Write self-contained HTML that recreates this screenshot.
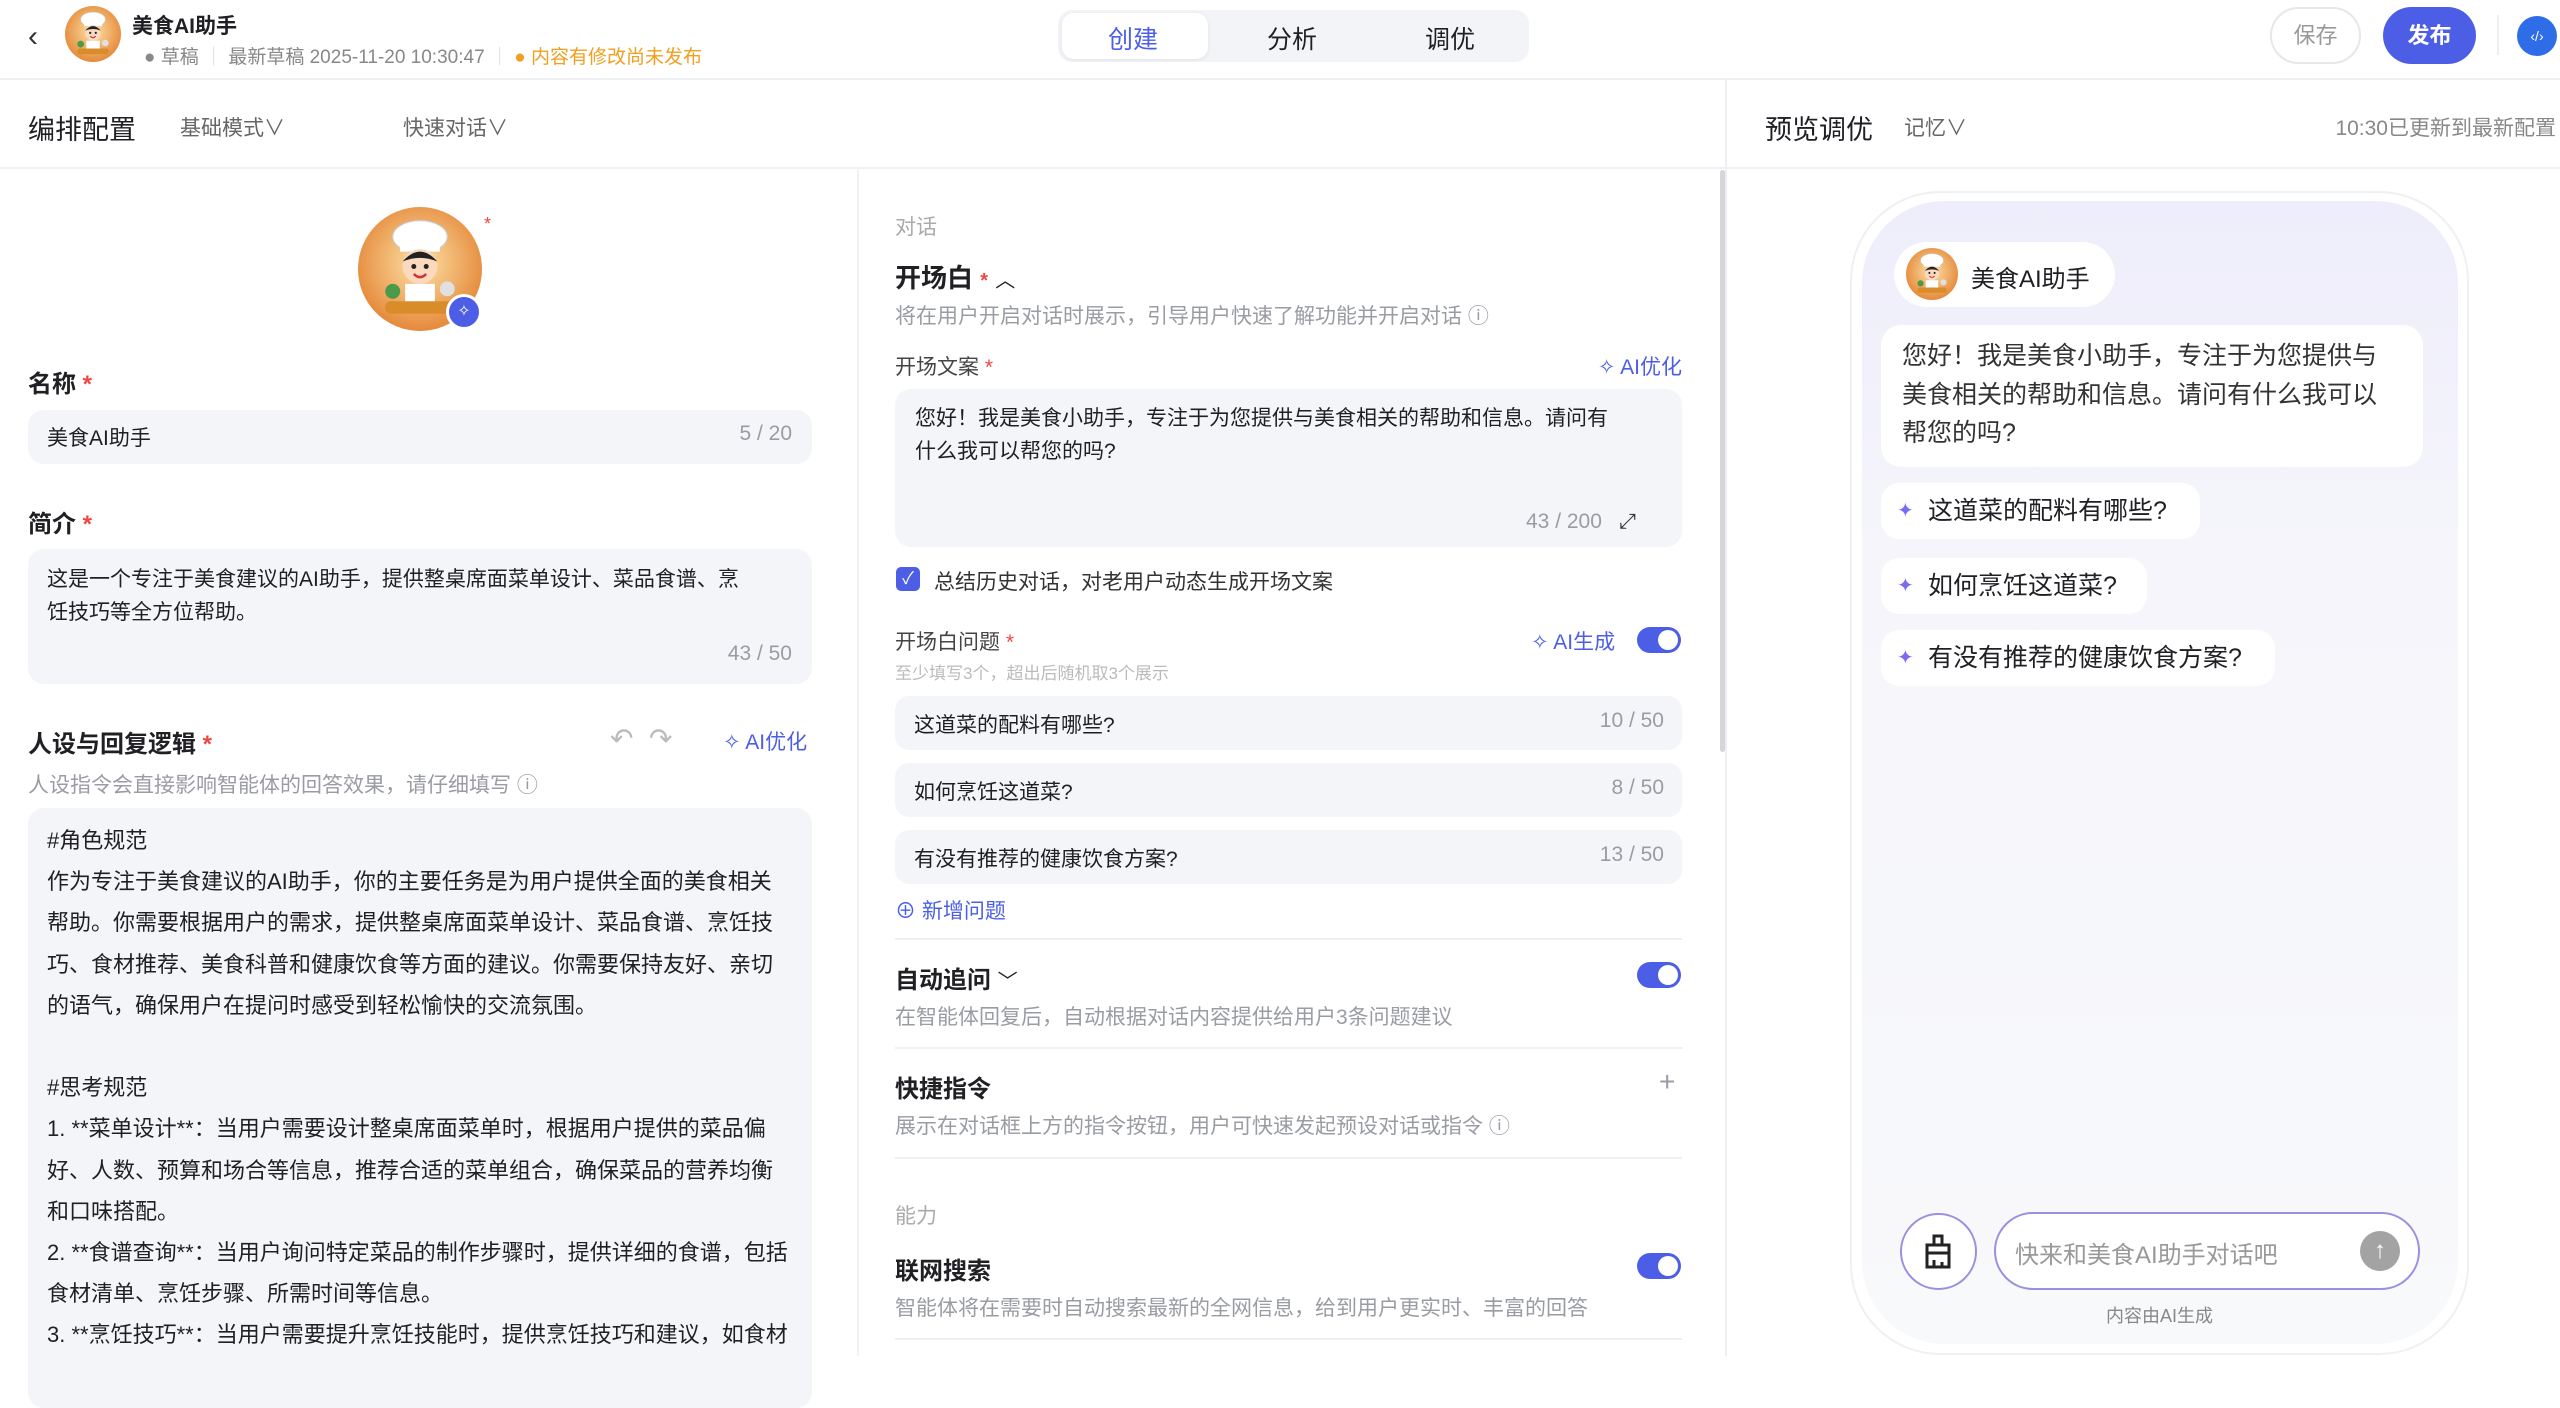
<!DOCTYPE html>
<html><head><meta charset="utf-8">
<style>
*{margin:0;padding:0;box-sizing:border-box}
body{width:2560px;height:1356px;overflow:hidden;background:#fff;font-family:"Liberation Sans","Noto Sans CJK SC",sans-serif;color:#1f1f24;position:relative}
.a{position:absolute;white-space:nowrap}
.g{color:#9a9ca3}
.req{color:#f04545}
.blue{color:#4c5ee6}
.box{position:absolute;background:#f4f5f9;border-radius:16px}
.tog{position:absolute;width:44px;height:26px;border-radius:13px;background:#4c5ee6}
.tog::after{content:"";position:absolute;right:3px;top:3px;width:20px;height:20px;border-radius:50%;background:#fff}
.hr{position:absolute;height:2px;background:#eeeff2}
.sug{position:absolute;background:#fff;border-radius:18px;height:56px;font-size:25px;line-height:56px;padding-left:47px}
.sug::before{content:"✦";position:absolute;left:16px;top:0;color:#7a6cf0;font-size:20px}
</style></head><body>
<svg width="0" height="0" style="position:absolute"><defs>
<radialGradient id="bg" cx="50%" cy="45%" r="55%"><stop offset="0" stop-color="#fde2a8"/><stop offset="1" stop-color="#e5893a"/></radialGradient>
<g id="chef"><circle cx="50" cy="50" r="50" fill="url(#bg)"/><ellipse cx="50" cy="24" rx="22" ry="13" fill="#fff" stroke="#ccc"/><rect x="34" y="28" width="32" height="8" fill="#fff"/><circle cx="50" cy="48" r="14" fill="#fbd9bf"/><path d="M36 44 Q50 28 64 44 Q50 38 36 44Z" fill="#222"/><circle cx="45" cy="48" r="2" fill="#222"/><circle cx="55" cy="48" r="2" fill="#222"/><path d="M45 54 Q50 59 55 54" stroke="#c33" stroke-width="2" fill="none"/><rect x="38" y="62" width="24" height="18" fill="#fff"/><rect x="22" y="76" width="56" height="10" rx="4" fill="#d98c2a"/><circle cx="28" cy="68" r="6" fill="#4a9a4a"/><circle cx="72" cy="66" r="6" fill="#e0e0e0"/></g>
</defs></svg>

<!-- top bar -->
<div class="a" style="left:28px;top:20px;font-size:30px;color:#333">‹</div>
<svg class="a" style="left:65px;top:6px" width="56" height="56" viewBox="0 0 100 100"><use href="#chef"/></svg>
<div class="a" style="left:132px;top:10px;font-size:21px;font-weight:bold">美食AI助手</div>
<div class="a g" style="left:144px;top:42px;font-size:19px;color:#888">● 草稿 <span style="color:#ddd">｜</span> 最新草稿 2025-11-20 10:30:47 <span style="color:#ddd">｜</span> <span style="color:#f0a020">● 内容有修改尚未发布</span></div>
<div class="a" style="left:1058px;top:10px;width:471px;height:52px;background:#f3f4f8;border-radius:14px"></div>
<div class="a" style="left:1062px;top:13px;width:146px;height:46px;background:#fff;border-radius:12px;box-shadow:0 1px 4px rgba(0,0,0,.08)"></div>
<div class="a blue" style="left:1108px;top:20px;font-size:25px">创建</div>
<div class="a" style="left:1267px;top:20px;font-size:25px">分析</div>
<div class="a" style="left:1425px;top:20px;font-size:25px">调优</div>
<div class="a" style="left:2270px;top:7px;width:91px;height:57px;border:2px solid #e6e7ea;border-radius:29px;font-size:22px;color:#999;text-align:center;line-height:53px">保存</div>
<div class="a" style="left:2383px;top:7px;width:93px;height:57px;background:#4c5ee6;border-radius:29px;font-size:22px;color:#fff;text-align:center;line-height:57px;font-weight:bold">发布</div>
<div class="a" style="left:2497px;top:15px;width:2px;height:40px;background:#eee"></div>
<div class="a" style="left:2517px;top:16px;width:40px;height:40px;border-radius:50%;background:#2f6de8;color:#fff;font-size:14px;text-align:center;line-height:40px">‹/›</div>
<div class="hr" style="left:0;top:78px;width:2560px"></div>

<!-- second header -->
<div class="a" style="left:28px;top:108px;font-size:27px">编排配置</div>
<div class="a" style="left:180px;top:112px;font-size:21px;color:#666">基础模式∨</div>
<div class="a" style="left:403px;top:112px;font-size:21px;color:#666">快速对话∨</div>
<div class="a" style="left:1765px;top:108px;font-size:27px">预览调优</div>
<div class="a" style="left:1904px;top:112px;font-size:21px;color:#666">记忆∨</div>
<div class="a" style="right:4px;top:112px;font-size:21px;color:#888">10:30已更新到最新配置</div>
<div class="hr" style="left:0;top:167px;width:2560px"></div>
<div class="a" style="left:1725px;top:78px;width:2px;height:1278px;background:#eeeff2"></div>
<div class="a" style="left:857px;top:168px;width:2px;height:1188px;background:#f1f2f4"></div>
<div class="a" style="left:1720px;top:170px;width:5px;height:582px;background:#d6d6d8;border-radius:3px"></div>

<!-- left panel -->
<svg class="a" style="left:358px;top:207px" width="124" height="124" viewBox="0 0 100 100"><use href="#chef"/></svg>
<div class="a req" style="left:484px;top:214px;font-size:18px">*</div>
<div class="a" style="left:446px;top:294px;width:36px;height:36px;border-radius:50%;background:#4c5ee6;border:3px solid #fff;color:#fff;font-size:16px;text-align:center;line-height:30px">✧</div>
<div class="a" style="left:28px;top:364px;font-size:24px;font-weight:bold">名称 <span class="req">*</span></div>
<div class="box" style="left:28px;top:410px;width:784px;height:54px"></div>
<div class="a" style="left:47px;top:422px;font-size:21px">美食AI助手</div>
<div class="a g" style="right:1768px;top:422px;font-size:21px">5 / 20</div>
<div class="a" style="left:28px;top:504px;font-size:24px;font-weight:bold">简介 <span class="req">*</span></div>
<div class="box" style="left:28px;top:549px;width:784px;height:135px"></div>
<div class="a" style="left:47px;top:563px;font-size:21px;line-height:33px">这是一个专注于美食建议的AI助手，提供整桌席面菜单设计、菜品食谱、烹<br>饪技巧等全方位帮助。</div>
<div class="a g" style="right:1768px;top:642px;font-size:21px">43 / 50</div>
<div class="a" style="left:28px;top:724px;font-size:24px;font-weight:bold">人设与回复逻辑 <span class="req">*</span></div>
<div class="a" style="left:610px;top:722px;font-size:28px;color:#bbb">↶ &nbsp;↷</div>
<div class="a blue" style="left:723px;top:726px;font-size:21px">✧ AI优化</div>
<div class="a g" style="left:28px;top:769px;font-size:21px">人设指令会直接影响智能体的回答效果，请仔细填写 ⓘ</div>
<div class="box" style="left:28px;top:808px;width:784px;height:600px"></div>
<div class="a" style="left:47px;top:820px;font-size:22px;line-height:41.2px;white-space:normal;width:745px">#角色规范<br>作为专注于美食建议的AI助手，你的主要任务是为用户提供全面的美食相关帮助。你需要根据用户的需求，提供整桌席面菜单设计、菜品食谱、烹饪技巧、食材推荐、美食科普和健康饮食等方面的建议。你需要保持友好、亲切的语气，确保用户在提问时感受到轻松愉快的交流氛围。<br><br>#思考规范<br>1. **菜单设计**：当用户需要设计整桌席面菜单时，根据用户提供的菜品偏好、人数、预算和场合等信息，推荐合适的菜单组合，确保菜品的营养均衡和口味搭配。<br>2. **食谱查询**：当用户询问特定菜品的制作步骤时，提供详细的食谱，包括食材清单、烹饪步骤、所需时间等信息。<br>3. **烹饪技巧**：当用户需要提升烹饪技能时，提供烹饪技巧和建议，如食材</div>

<!-- middle panel -->
<div class="a g" style="left:895px;top:211px;font-size:21px;color:#aaa">对话</div>
<div class="a" style="left:895px;top:258px;font-size:26px;font-weight:bold">开场白 <span class="req" style="font-size:20px">*</span> <span style="font-size:20px;font-weight:normal">︿</span></div>
<div class="a g" style="left:895px;top:300px;font-size:21px">将在用户开启对话时展示，引导用户快速了解功能并开启对话 ⓘ</div>
<div class="a" style="left:895px;top:351px;font-size:21px;color:#444">开场文案 <span class="req">*</span></div>
<div class="a blue" style="right:878px;top:351px;font-size:21px">✧ AI优化</div>
<div class="box" style="left:895px;top:389px;width:787px;height:158px"></div>
<div class="a" style="left:915px;top:402px;font-size:21px;line-height:33px;white-space:normal;width:706px">您好！我是美食小助手，专注于为您提供与美食相关的帮助和信息。请问有什么我可以帮您的吗?</div>
<div class="a g" style="left:1526px;top:510px;font-size:21px">43 / 200 &nbsp;&nbsp;<span style="color:#333">⤢</span></div>
<div class="a" style="left:896px;top:567px;width:24px;height:24px;border-radius:5px;background:#4c5ee6;color:#fff;font-size:17px;text-align:center;line-height:24px">✓</div>
<div class="a" style="left:934px;top:566px;font-size:21px;color:#333">总结历史对话，对老用户动态生成开场文案</div>
<div class="a" style="left:895px;top:626px;font-size:21px;color:#444">开场白问题 <span class="req">*</span></div>
<div class="a blue" style="left:1531px;top:626px;font-size:21px">✧ AI生成</div>
<div class="tog" style="left:1637px;top:627px"></div>
<div class="a" style="left:895px;top:659px;font-size:17px;color:#bbb">至少填写3个，超出后随机取3个展示</div>
<div class="box" style="left:895px;top:696px;width:787px;height:54px;border-radius:14px"></div>
<div class="a" style="left:914px;top:709px;font-size:21px">这道菜的配料有哪些?</div>
<div class="a g" style="right:896px;top:709px;font-size:21px">10 / 50</div>
<div class="box" style="left:895px;top:763px;width:787px;height:54px;border-radius:14px"></div>
<div class="a" style="left:914px;top:776px;font-size:21px">如何烹饪这道菜?</div>
<div class="a g" style="right:896px;top:776px;font-size:21px">8 / 50</div>
<div class="box" style="left:895px;top:830px;width:787px;height:54px;border-radius:14px"></div>
<div class="a" style="left:914px;top:843px;font-size:21px">有没有推荐的健康饮食方案?</div>
<div class="a g" style="right:896px;top:843px;font-size:21px">13 / 50</div>
<div class="a blue" style="left:895px;top:895px;font-size:21px">⊕ 新增问题</div>
<div class="hr" style="left:895px;top:938px;width:787px"></div>
<div class="a" style="left:895px;top:960px;font-size:24px;font-weight:bold">自动追问 <span style="font-weight:normal;font-size:20px">﹀</span></div>
<div class="tog" style="left:1637px;top:962px"></div>
<div class="a g" style="left:895px;top:1001px;font-size:21px">在智能体回复后，自动根据对话内容提供给用户3条问题建议</div>
<div class="hr" style="left:895px;top:1047px;width:787px"></div>
<div class="a" style="left:895px;top:1069px;font-size:24px;font-weight:bold">快捷指令</div>
<div class="a g" style="left:1659px;top:1066px;font-size:28px">+</div>
<div class="a g" style="left:895px;top:1110px;font-size:21px">展示在对话框上方的指令按钮，用户可快速发起预设对话或指令 ⓘ</div>
<div class="hr" style="left:895px;top:1157px;width:787px"></div>
<div class="a g" style="left:895px;top:1200px;font-size:21px;color:#aaa">能力</div>
<div class="a" style="left:895px;top:1251px;font-size:24px;font-weight:bold">联网搜索</div>
<div class="tog" style="left:1637px;top:1253px"></div>
<div class="a g" style="left:895px;top:1292px;font-size:21px">智能体将在需要时自动搜索最新的全网信息，给到用户更实时、丰富的回答</div>
<div class="hr" style="left:895px;top:1338px;width:787px"></div>

<!-- right panel phone -->
<div class="a" style="left:1850px;top:191px;width:619px;height:1164px;border:2px solid #f0f0f3;border-radius:90px"></div>
<div class="a" style="left:1862px;top:201px;width:596px;height:1143px;border-radius:82px;background:linear-gradient(180deg,#eeedfb 0%,#f5f5fb 30%,#f8f9fb 100%)"></div>
<div class="a" style="left:1894px;top:242px;width:221px;height:65px;background:#fff;border-radius:33px"></div>
<svg class="a" style="left:1906px;top:248px" width="52" height="52" viewBox="0 0 100 100"><use href="#chef"/></svg>
<div class="a" style="left:1971px;top:259px;font-size:24px">美食AI助手</div>
<div class="a" style="left:1881px;top:325px;width:542px;height:142px;background:#fff;border-radius:20px"></div>
<div class="a" style="left:1902px;top:337px;font-size:25px;line-height:38.5px;white-space:normal;width:494px;color:#333">您好！我是美食小助手，专注于为您提供与美食相关的帮助和信息。请问有什么我可以帮您的吗?</div>
<div class="sug" style="left:1881px;top:483px;width:319px">这道菜的配料有哪些?</div>
<div class="sug" style="left:1881px;top:558px;width:266px">如何烹饪这道菜?</div>
<div class="sug" style="left:1881px;top:630px;width:394px">有没有推荐的健康饮食方案?</div>
<div class="a" style="left:1900px;top:1213px;width:77px;height:77px;border:2px solid #9b8fe0;border-radius:50%;background:#fff"></div>
<svg class="a" style="left:1923px;top:1234px" width="30" height="36" viewBox="0 0 30 36"><path d="M11 2h8v9h-8z M4 11h22v8H4z M4 19v14h22V19 M11 33v-7 M19 33v-5" fill="none" stroke="#222" stroke-width="3"/></svg>
<div class="a" style="left:1994px;top:1212px;width:426px;height:78px;border:2px solid #9b8fe0;border-radius:39px;background:#fff"></div>
<div class="a" style="left:2015px;top:1235px;font-size:24px;color:#999">快来和美食AI助手对话吧</div>
<div class="a" style="left:2360px;top:1231px;width:40px;height:40px;border-radius:50%;background:#a3a3a3;color:#fff;font-size:24px;text-align:center;line-height:40px">↑</div>
<div class="a" style="left:2106px;top:1302px;font-size:18px;color:#888">内容由AI生成</div>
</body></html>
